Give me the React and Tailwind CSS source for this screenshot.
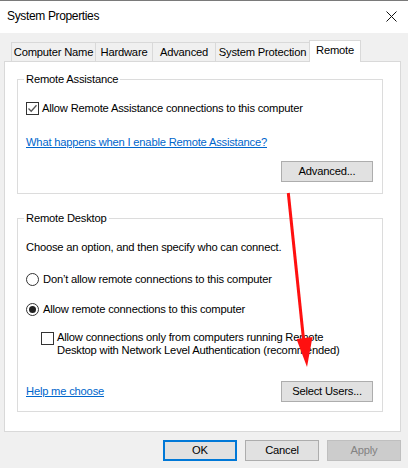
const font = "font-['Liberation_Sans',Arial,sans-serif]"

function CheckBox({ checked }) {
  return (
    <span className="w-[13px] h-[13px] border border-[#333] bg-white flex items-center justify-center shrink-0">
      {checked && (
        <svg width="11" height="11" viewBox="0 0 11 11">
          <path d="M1.5 5.5 L4.2 8.3 L9.5 2.2" fill="none" stroke="#555" strokeWidth="1.3" />
        </svg>
      )}
    </span>
  )
}

function Radio({ checked }) {
  return (
    <span className="w-[13px] h-[13px] rounded-full border border-[#333] bg-white flex items-center justify-center shrink-0">
      {checked && <span className="w-[7px] h-[7px] rounded-full bg-[#222]" />}
    </span>
  )
}

function Btn({ children }) {
  return (
    <div className="w-[92px] h-[21px] bg-[#e1e1e1] border border-[#adadad] flex items-center justify-center">
      {children}
    </div>
  )
}

function GroupBox({ title, children, className }) {
  return (
    <div className={`relative w-[366px] border border-[#dcdcdc] ${className}`}>
      <span className="absolute -top-[8px] left-[6px] bg-white px-[2px] leading-[15px]">{title}</span>
      {children}
    </div>
  )
}

const tabs = [
  { label: 'Computer Name', w: 'w-[85px]' },
  { label: 'Hardware', w: 'w-[58px] -ml-px' },
  { label: 'Advanced', w: 'w-[64px] -ml-px' },
  { label: 'System Protection', w: 'w-[95px] -ml-px' },
]

export default function App() {
  return (
    <div className={`relative w-[408px] h-[468px] bg-[#f0f0f0] text-black text-[11.2px] tracking-[-0.2px] ${font}`}>
      {/* title bar */}
      <div className="h-[33px] bg-white border-t border-[#7a7a7a] flex items-center justify-between pl-[7px] pr-[11px]">
        <span className="text-[12px] tracking-[-0.35px] -mt-[2px]">System Properties</span>
        <svg width="11" height="11" viewBox="0 0 11 11" className="-mt-[2px]">
          <path d="M0.5 0.5 L10.5 10.5 M10.5 0.5 L0.5 10.5" stroke="#111" strokeWidth="1" />
        </svg>
      </div>

      {/* tabs */}
      <div className="h-[21px] mt-[7px] ml-[11px] flex items-end">
        {tabs.map(t => (
          <div key={t.label} className={`${t.w} h-[19px] border border-b-0 border-[#d9d9d9] flex items-center justify-center pt-[1px]`}>
            {t.label}
          </div>
        ))}
        <div className="relative z-10 w-[52px] h-[22px] -mb-px -ml-px bg-white border border-b-0 border-[#d9d9d9] flex items-center justify-center pb-[3px]">
          Remote
        </div>
      </div>

      {/* panel */}
      <div className="ml-[4px] w-[397px] h-[371px] bg-white border border-[#d9d9d9] pl-[12px] pt-[17px]">
        <GroupBox title="Remote Assistance" className="pt-[20px] pb-[11px]">
          <div className="h-[16px] flex items-center gap-[3px] pl-[8px]">
            <CheckBox checked />
            <span>Allow Remote Assistance connections to this computer</span>
          </div>
          <div className="h-[16px] mt-[18px] pl-[8px] flex items-center">
            <span className="text-[#0066cc] underline">What happens when I enable Remote Assistance?</span>
          </div>
          <div className="mt-[11px] flex justify-end pr-[9px]">
            <Btn>Advanced...</Btn>
          </div>
        </GroupBox>

        <GroupBox title="Remote Desktop" className="mt-[24px] pt-[20px] pb-[9px]">
          <div className="h-[16px] pl-[8px] flex items-center">Choose an option, and then specify who can connect.</div>
          <div className="h-[16px] mt-[16px] pl-[8px] flex items-center gap-[4px]">
            <Radio />
            <span>Don’t allow remote connections to this computer</span>
          </div>
          <div className="h-[16px] mt-[14px] pl-[8px] flex items-center gap-[4px]">
            <Radio checked />
            <span>Allow remote connections to this computer</span>
          </div>
          <div className="mt-[14px] pl-[23px] flex items-start gap-[3px]">
            <span className="mt-[1px]"><CheckBox /></span>
            <span className="leading-[13px]">
              Allow connections only from computers running Remote<br />
              Desktop with Network Level Authentication (recommended)
            </span>
          </div>
          <div className="mt-[24px] flex items-center justify-between pl-[8px] pr-[9px]">
            <span className="text-[#0066cc] underline">Help me choose</span>
            <Btn>Select Users...</Btn>
          </div>
        </GroupBox>
      </div>

      {/* dialog buttons */}
      <div className="mt-[8px] flex justify-end gap-[8px] pr-[7px]">
        <div className="w-[74px] h-[21px] bg-[#e1e1e1] border-2 border-[#0078d7] flex items-center justify-center">OK</div>
        <div className="w-[74px] h-[21px] bg-[#e1e1e1] border border-[#adadad] flex items-center justify-center">Cancel</div>
        <div className="w-[74px] h-[21px] bg-[#cccccc] border border-[#bfbfbf] text-[#838383] flex items-center justify-center">Apply</div>
      </div>

      {/* red annotation arrow */}
      <svg className="absolute inset-0 pointer-events-none" width="408" height="468" viewBox="0 0 408 468">
        <line x1="288.3" y1="193" x2="303.8" y2="342" stroke="#ff1010" strokeWidth="3" />
        <polygon points="296.5,339 312.5,337 307,367" fill="#ff1010" />
      </svg>
    </div>
  )
}
